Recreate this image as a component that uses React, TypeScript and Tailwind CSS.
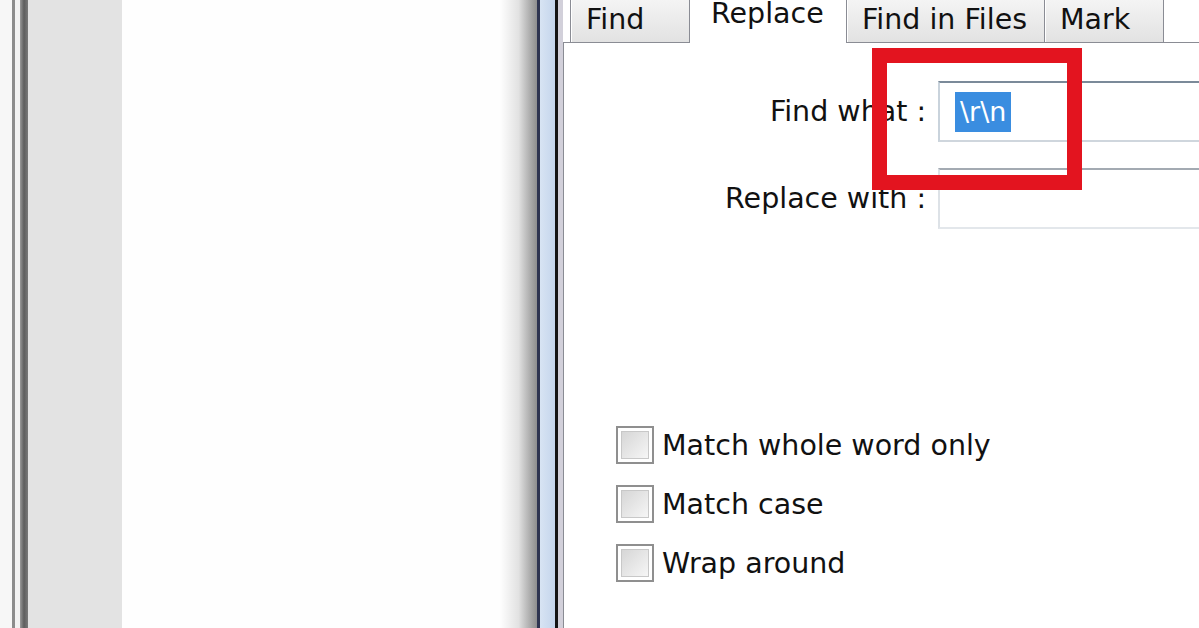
import React from 'react';

const font = { fontFamily: '"DejaVu Sans", Verdana, sans-serif' };

function Tab({ label, width, selected, last }: { label: string; width: number; selected?: boolean; last?: boolean }) {
  if (selected) {
    return (
      <div
        className="h-[43px] border-l border-r border-[#8a8c94] bg-white pl-[21px] text-[28.5px] leading-[34px] text-[#111111] -mx-px z-10"
        style={{ width }}
      >
        <div className="mt-[-3px]">{label}</div>
      </div>
    );
  }
  return (
    <div
      className={`h-[43px] border-l border-b border-[#8a8c94] bg-gradient-to-b from-[#f4f4f4] to-[#e2e2e2] pl-[15px] pt-[3px] text-[28.5px] leading-[34px] text-[#111111] shadow-[inset_1px_0_0_#ffffff] ${last ? 'border-r' : ''}`}
      style={{ width }}
    >
      {label}
    </div>
  );
}

function Checkbox({ label }: { label: string }) {
  return (
    <div className="flex items-center h-[38px]">
      <div className="w-[38px] h-[38px] border-[2px] border-[#8f8f8f] bg-white p-[3px]">
        <div className="w-full h-full border border-[#c8c8c8] bg-gradient-to-br from-[#d6d6d6] to-[#f6f6f6]" />
      </div>
      <span className="ml-[8px] text-[28.5px] leading-[34px] text-[#111111] mt-[2px]">{label}</span>
    </div>
  );
}

export default function App() {
  return (
    <div className="relative w-[1199px] h-[628px] overflow-hidden flex bg-white" style={font}>
      {/* editor side */}
      <div className="w-[12px] bg-[#f7f7f7]" />
      <div className="w-[3px] bg-[#8c8c8c]" />
      <div className="w-[5px] bg-[#f2f2f2]" />
      <div className="w-[8px] bg-gradient-to-r from-[#9a9a9a] via-[#5e5e5e] to-[#7a7a7a]" />
      <div className="w-[94px] bg-[#e3e3e3]" />
      <div className="w-[378px] bg-[#fefefe]" />
      <div className="w-[37px] bg-gradient-to-r from-[#fefefe] via-[#e2e2e2] to-[#8e8e8e]" />
      {/* dialog frame */}
      <div className="w-[3px] bg-[#2e3450]" />
      <div className="w-[15px] bg-gradient-to-r from-[#d8e4f3] to-[#c4d5ec]" />
      <div className="w-[3px] bg-[#141414]" />
      <div className="w-[5px] bg-[#d2d0da]" />

      {/* dialog */}
      <div className="flex-1 flex flex-col min-w-0">
        <div className="flex items-end h-[43px] shrink-0">
          <div className="w-[7px] h-[43px] border-b border-[#8a8c94]" />
          <Tab label="Find" width={120} />
          <Tab label="Replace" width={158} selected />
          <Tab label="Find in Files" width={198} />
          <Tab label="Mark" width={120} last />
          <div className="flex-1 h-[43px] border-b border-[#8a8c94]" />
        </div>

        <div className="flex-1 border-l border-[#8a8c94] bg-white flex flex-col">
          <div className="flex items-center mt-[38px] h-[61px]">
            <div className="w-[362px] text-right text-[28.5px] leading-[34px] text-[#111111] shrink-0">Find what :</div>
            <div className="ml-[12px] w-[400px] h-[61px] shrink-0 border-t-2 border-t-[#7b8a99] border-l-2 border-l-[#c9d3dc] border-b-2 border-b-[#cfd6dd] flex items-center pl-[15px]">
              <span className="bg-[#3a8de0] text-white text-[27px] leading-[40px] px-[5px]">\r\n</span>
            </div>
          </div>
          <div className="flex items-center mt-[26px] h-[61px]">
            <div className="w-[362px] text-right text-[28.5px] leading-[34px] text-[#111111] shrink-0">Replace with :</div>
            <div className="ml-[12px] w-[400px] h-[61px] shrink-0 border-t-2 border-t-[#a3aab2] border-l-2 border-l-[#dde2e7] border-b-2 border-b-[#e3e7eb]" />
          </div>

          <div className="flex flex-col gap-[21px] ml-[52px] mt-[197px]">
            <Checkbox label="Match whole word only" />
            <Checkbox label="Match case" />
            <Checkbox label="Wrap around" />
          </div>
        </div>
      </div>

      {/* red highlight annotation */}
      <div className="absolute left-[872px] top-[48px] w-[210px] h-[142px] border-[15px] border-[#e3141f]" />
    </div>
  );
}
